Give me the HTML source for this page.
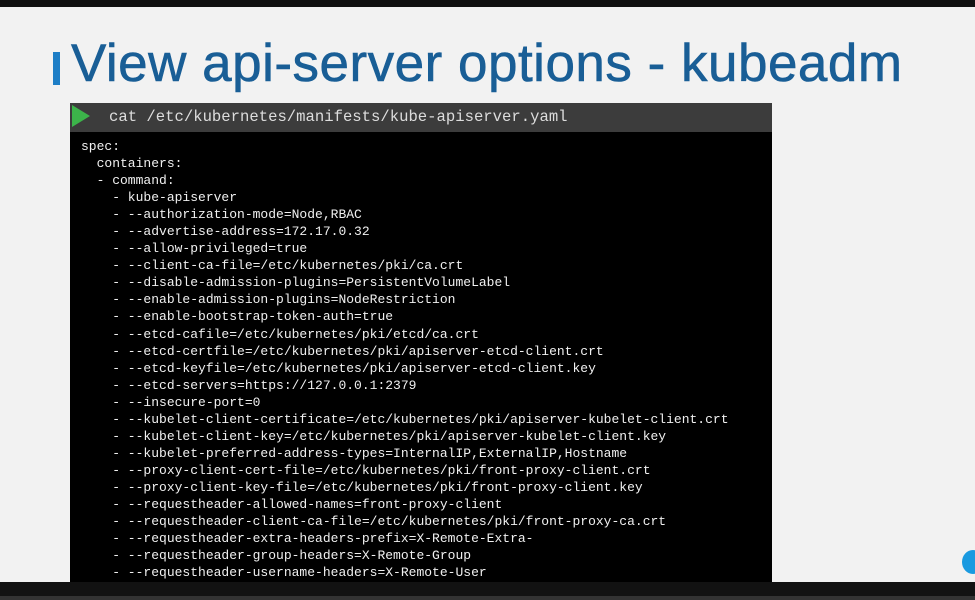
<!DOCTYPE html>
<html><head><style>
html,body{margin:0;padding:0}
body{width:975px;height:600px;position:relative;overflow:hidden;background:#f2f2f2;font-family:"Liberation Sans",sans-serif}
.top{position:absolute;left:0;top:0;width:975px;height:7px;background:#111}
.bot{position:absolute;left:0;top:582px;width:975px;height:14px;background:#121212}
.bot2{position:absolute;left:0;top:596px;width:975px;height:4px;background:#333}
.bar{position:absolute;left:53px;top:52px;width:7px;height:33px;background:#1d7ec6}
.title{position:absolute;left:71px;top:33px;font-size:53px;color:#195e96;white-space:nowrap;letter-spacing:0.5px;-webkit-text-stroke:0.6px #195e96}
.head{position:absolute;left:70px;top:103px;width:702px;height:29px;background:#3c3c3c}
.tri{position:absolute;left:72px;top:105px;width:0;height:0;border-top:11px solid transparent;border-bottom:11px solid transparent;border-left:18px solid #3cb44a}
.cmd{position:absolute;left:109px;top:108px;font-family:"Liberation Mono",monospace;font-size:15.6px;color:#ddd;white-space:nowrap}
.term{position:absolute;left:70px;top:132px;width:702px;height:450px;background:#000}
pre{position:absolute;left:81px;top:138px;margin:0;font-family:"Liberation Mono",monospace;font-size:13px;line-height:17.05px;color:#f0f0f0}
.cloud{position:absolute;left:962px;top:550px;width:22px;height:24px;border-radius:50%;background:#1a9ae0}
</style></head><body>
<div class="top"></div>
<div class="bar"></div>
<div class="title">View api-server options - kubeadm</div>
<div class="head"></div><div class="tri"></div>
<div class="cmd">cat /etc/kubernetes/manifests/kube-apiserver.yaml</div>
<div class="term"></div>
<pre>spec:
  containers:
  - command:
    - kube-apiserver
    - --authorization-mode=Node,RBAC
    - --advertise-address=172.17.0.32
    - --allow-privileged=true
    - --client-ca-file=/etc/kubernetes/pki/ca.crt
    - --disable-admission-plugins=PersistentVolumeLabel
    - --enable-admission-plugins=NodeRestriction
    - --enable-bootstrap-token-auth=true
    - --etcd-cafile=/etc/kubernetes/pki/etcd/ca.crt
    - --etcd-certfile=/etc/kubernetes/pki/apiserver-etcd-client.crt
    - --etcd-keyfile=/etc/kubernetes/pki/apiserver-etcd-client.key
    - --etcd-servers=https://127.0.0.1:2379
    - --insecure-port=0
    - --kubelet-client-certificate=/etc/kubernetes/pki/apiserver-kubelet-client.crt
    - --kubelet-client-key=/etc/kubernetes/pki/apiserver-kubelet-client.key
    - --kubelet-preferred-address-types=InternalIP,ExternalIP,Hostname
    - --proxy-client-cert-file=/etc/kubernetes/pki/front-proxy-client.crt
    - --proxy-client-key-file=/etc/kubernetes/pki/front-proxy-client.key
    - --requestheader-allowed-names=front-proxy-client
    - --requestheader-client-ca-file=/etc/kubernetes/pki/front-proxy-ca.crt
    - --requestheader-extra-headers-prefix=X-Remote-Extra-
    - --requestheader-group-headers=X-Remote-Group
    - --requestheader-username-headers=X-Remote-User</pre>
<div class="cloud"></div>
<div class="bot"></div><div class="bot2"></div>
</body></html>
